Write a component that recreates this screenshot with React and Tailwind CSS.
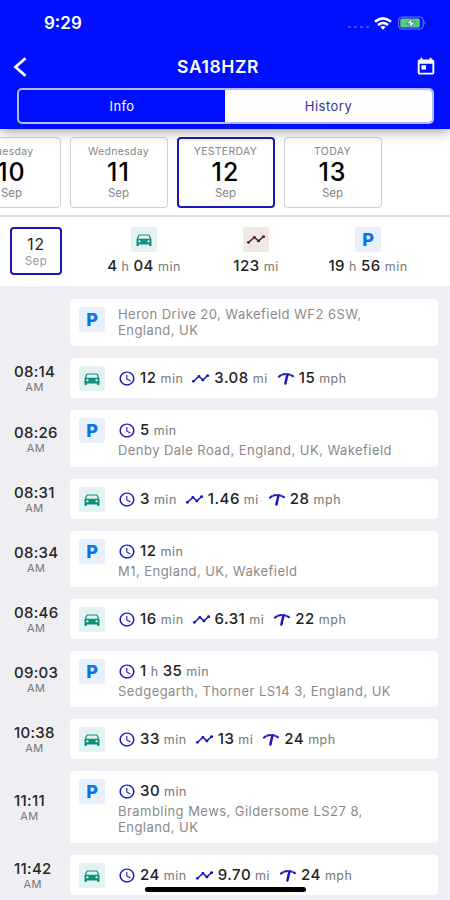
import React from "react";
import { MdAccessTime, MdDirectionsCar, MdTimeline, MdToday } from "react-icons/md";

const TRIPS = [
  { type: "park", h: "h-[47px]", address: ["Heron Drive 20, Wakefield WF2 6SW,", "England, UK"] },
  { type: "drive", h: "h-10", time: "08:14", min: "12", miles: "3.08", speed: "15" },
  { type: "park", h: "h-[57px]", time: "08:26", dur: [["5", "min"]], address: ["Denby Dale Road, England, UK, Wakefield"] },
  { type: "drive", h: "h-10", time: "08:31", min: "3", miles: "1.46", speed: "28" },
  { type: "park", h: "h-14", time: "08:34", dur: [["12", "min"]], address: ["M1, England, UK, Wakefield"] },
  { type: "drive", h: "h-10", time: "08:46", min: "16", miles: "6.31", speed: "22" },
  { type: "park", h: "h-14", time: "09:03", dur: [["1", "h"], ["35", "min"]], address: ["Sedgegarth, Thorner LS14 3, England, UK"] },
  { type: "drive", h: "h-10", time: "10:38", min: "33", miles: "13", speed: "24" },
  { type: "park", h: "h-[72px]", time: "11:11", dur: [["30", "min"]], address: ["Brambling Mews, Gildersome LS27 8,", "England, UK"] },
  { type: "drive", h: "h-10", time: "11:42", min: "24", miles: "9.70", speed: "24" },
];

const DAYS = [
  { name: "Tuesday", day: "10" },
  { name: "Wednesday", day: "11" },
  { name: "YESTERDAY", day: "12", active: true },
  { name: "TODAY", day: "13" },
];

function Amount({ parts }) {
  return (
    <span className="flex items-baseline gap-1 whitespace-nowrap leading-4">
      {parts.map(([n, unit]) => (
        <React.Fragment key={unit}>
          <span className="text-[15px] font-medium tracking-[0.5px] text-[#222]">{n}</span>
          <span className="text-[12.5px] tracking-[0.5px] text-[#777]">{unit}</span>
        </React.Fragment>
      ))}
    </span>
  );
}

function Badge({ type }) {
  const bg = { park: "bg-[#e8f0fc]", drive: "bg-[#e2f3f2]", route: "bg-[#f0e8e7]" }[type];
  return (
    <span className={`flex h-[25px] w-[26px] shrink-0 items-center justify-center rounded-[3px] ${bg}`}>
      {type === "park" && <span className="text-[18px] font-extrabold leading-none text-[#0b74e8]">P</span>}
      {type === "drive" && <MdDirectionsCar preserveAspectRatio="none" className="h-[17px] w-[20px] text-[#128f7c]" />}
      {type === "route" && <MdTimeline preserveAspectRatio="none" className="h-[17px] w-[20px] text-[#552a22]" />}
    </span>
  );
}

function SpeedIcon() {
  return (
    <svg viewBox="0 0 18 14" className="h-[14px] w-[18px] shrink-0" fill="none" stroke="#1b18b8">
      <path d="M1.3 5.2Q8.5 -1.2 16.7 4.8" strokeWidth="2" strokeDasharray="4 .4" />
      <path d="M10.3 3L8.4 11.6" strokeWidth="2.5" strokeLinecap="round" />
    </svg>
  );
}

function Clock() {
  return <MdAccessTime preserveAspectRatio="none" className="h-[17px] w-[18px] shrink-0 text-[#1b18b8]" />;
}

function DayCard({ name, day, active }) {
  return (
    <div
      className={`flex h-[71px] w-[98px] shrink-0 flex-col items-center rounded-[4px] ${
        active ? "border-2 border-[#1c18b8] pt-[7px]" : "border border-[#cfcfcf] pt-[8px]"
      }`}
    >
      <span className="text-[10.5px] leading-[11px] tracking-[0.3px] text-[#858585]">{name}</span>
      <span className="mt-[1px] text-[25px] font-medium leading-[28px] tracking-[1px] text-black">{day}</span>
      <span className="text-[11.5px] leading-[14px] text-[#858585]">Sep</span>
    </div>
  );
}

function Trip({ trip }) {
  return (
    <div className={`flex ${trip.h} w-full shrink-0 items-center`}>
      <div className="w-[70px] shrink-0 pb-[3px] pl-[14px]">
        {trip.time && (
          <div className="inline-flex flex-col items-center">
            <span className="text-[15px] font-medium leading-[16px] tracking-[0.3px] text-[#252525]">{trip.time}</span>
            <span className="text-[11px] leading-[14px] tracking-[0.5px] text-[#777]">AM</span>
          </div>
        )}
      </div>
      <div className="flex h-full w-[368px] items-start rounded-[4px] bg-white pl-[9px] pt-2">
        <Badge type={trip.type} />
        {trip.type === "drive" ? (
          <div className="ml-[13px] flex h-[25px] items-center">
            <Clock />
            <div className="ml-1"><Amount parts={[[trip.min, "min"]]} /></div>
            <MdTimeline preserveAspectRatio="none" className="ml-[8px] mr-[4px] h-[17px] w-[19px] shrink-0 text-[#1b18b8]" />
            <Amount parts={[[trip.miles, "mi"]]} />
            <span className="ml-[9px] mr-1 flex"><SpeedIcon /></span>
            <Amount parts={[[trip.speed, "mph"]]} />
          </div>
        ) : (
          <div className="ml-[13px]">
            {trip.dur && (
              <div className="flex h-[25px] items-center gap-1">
                <Clock />
                <Amount parts={trip.dur} />
              </div>
            )}
            {trip.address.map((line) => (
              <p key={line} className="whitespace-nowrap text-[13px] leading-[15.5px] tracking-[0.45px] text-[#8a8a8a]">{line}</p>
            ))}
          </div>
        )}
      </div>
    </div>
  );
}

function StatusBar() {
  return (
    <div className="flex h-[46px] items-center justify-between pl-[44px] pr-[23px]">
      <span className="text-[17px] font-semibold leading-none">9:29</span>
      <div className="flex items-center">
        <div className="mr-[5px] mt-[7px] flex gap-[3px]">
          {[0, 1, 2, 3].map((i) => <i key={i} className="h-[2px] w-[3px] bg-[#3e4bff]" />)}
        </div>
        <svg viewBox="0 0 18 13" className="h-[13px] w-[18px]" fill="none" stroke="white" strokeWidth="2.6">
          <path d="M1 4.7Q9 -1.8 17 4.7M4 8Q9 4 14 8" />
          <path d="M6.3 10Q9 7.8 11.7 10L9 12.8Z" fill="white" stroke="none" />
        </svg>
        <svg viewBox="0 0 29 14" className="ml-[6px] h-[14px] w-[29px]">
          <rect x=".7" y="1" width="24.5" height="12" rx="3" fill="none" stroke="#6f7bf5" />
          <rect x="2.3" y="2.5" width="19.5" height="9" rx="1.5" fill="#52cf72" />
          <path d="M14.5 2L8.5 7.7H12L11 12L17.5 6.2H13.6Z" fill="white" stroke="#1234b5" strokeWidth=".6" />
          <path d="M26.5 5V9Q28.5 7 26.5 5Z" fill="#6f7bf5" />
        </svg>
      </div>
    </div>
  );
}

export default function App() {
  return (
    <main className="relative flex h-[900px] w-[450px] flex-col overflow-hidden bg-[#eeeef3] font-['Inter',sans-serif]">
      <header className="z-10 h-[129px] shrink-0 bg-[#0010ff] text-white shadow-[0_2px_12px_rgba(0,0,0,0.4)]">
        <StatusBar />
        <div className="grid h-[42px] grid-cols-[60px_1fr_60px] items-center">
          <svg viewBox="0 0 14 20" className="ml-[13px] h-5 w-[14px]" fill="none" stroke="white" strokeWidth="2.8">
            <path d="M12.5 1.2L2.5 10L12.5 18.8" />
          </svg>
          <h1 className="pr-[14px] pt-[1px] text-center text-[17.5px] font-semibold tracking-[0.6px]">SA18HZR</h1>
          <MdToday preserveAspectRatio="none" className="ml-[25px] h-5 w-[22px]" />
        </div>
        <div className="ml-[17px] flex h-[36px] w-[417px] overflow-hidden rounded-[5px] border-2 border-[#b3b9ff] text-[13px]">
          <span className="flex w-[206px] items-center justify-center pt-[1px] tracking-[0.4px]">Info</span>
          <span className="flex flex-1 items-center justify-center bg-white pt-[1px] tracking-[0.5px] text-[#33338f]">History</span>
        </div>
      </header>

      <section className="flex h-[88px] shrink-0 border-b-2 border-[#dcdcdc] bg-white pt-2">
        <div className="ml-[-37.5px] flex gap-[9px]">
          {DAYS.map((d) => <DayCard key={d.day} {...d} />)}
        </div>
      </section>

      <section className="flex h-[69px] shrink-0 bg-white pt-[10px]">
        <div className="ml-[10px] flex h-[48px] w-[52px] flex-col items-center rounded-[4px] border-2 border-[#1c18b8] pt-[7px]">
          <span className="text-[15.5px] leading-[18px] tracking-[0.8px] text-[#222]">12</span>
          <span className="text-[11.5px] leading-[14px] tracking-[0.4px] text-[#999]">Sep</span>
        </div>
        <div className="ml-[26px] flex w-[336px]">
          {[
            ["drive", [["4", "h"], ["04", "min"]]],
            ["route", [["123", "mi"]]],
            ["park", [["19", "h"], ["56", "min"]]],
          ].map(([type, parts]) => (
            <div key={type} className="flex flex-1 flex-col items-center">
              <Badge type={type} />
              <div className="mt-[6px]"><Amount parts={parts} /></div>
            </div>
          ))}
        </div>
      </section>

      <section className="flex flex-col gap-3 pt-[13px]">
        {TRIPS.map((trip, i) => <Trip key={i} trip={trip} />)}
      </section>
      <div className="absolute bottom-[8px] left-[145px] h-[5px] w-[161px] rounded-full bg-black" />
    </main>
  );
}
